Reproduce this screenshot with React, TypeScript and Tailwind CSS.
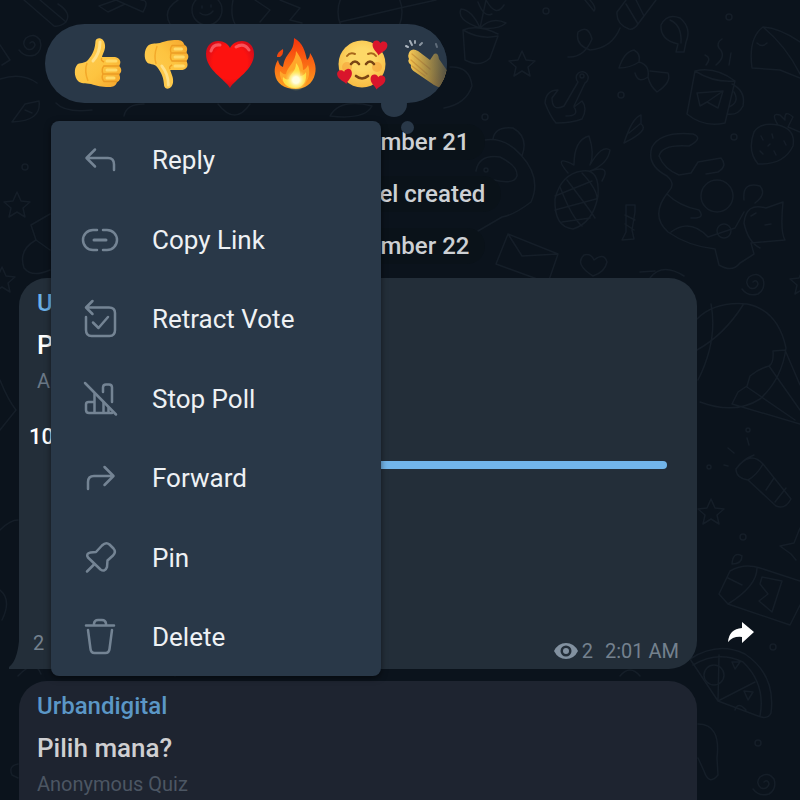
import type { ReactNode } from "react";

function Icon({ children }: { children: ReactNode }) {
  return (
    <svg className="size-10 shrink-0" viewBox="0 0 40 40" fill="none" stroke="#748494" strokeWidth="2.5" strokeLinecap="round" strokeLinejoin="round">
      {children}
    </svg>
  );
}

const menuItems = [
  {
    label: "Reply",
    icon: <path d="M15 9.5L6.5 18L15 26.5M7 18H28Q34 18 34 24.5V30" />,
  },
  {
    label: "Copy Link",
    icon: (
      <>
        <path d="M17 10H13A10 10 0 0 0 13 30H17M23 10H27A10 10 0 0 1 27 30H23" />
        <path d="M14 20H26" strokeWidth="3" />
      </>
    ),
  },
  {
    label: "Retract Vote",
    icon: (
      <>
        <path d="M12.5 2L6 8.5L12.5 15M6.5 8.5H29Q35 8.5 35 14V31Q35 37 29.5 37H11.5Q6 37 6 31V18" />
        <path d="M13 23.5L18.5 29L28 18" />
      </>
    ),
  },
  {
    label: "Stop Poll",
    icon: (
      <>
        <path d="M5 4L36 35.5" />
        <path d="M14.5 34V23H8.5Q6 23 6 25.5V31Q6 34 9 34H32M14.5 23V15M23.5 34V23M28.5 34V29" />
        <path d="M23 13V8.5Q23 5.5 26 5.5H29Q32 5.5 32 8.5V23" />
      </>
    ),
  },
  {
    label: "Forward",
    icon: <path d="M24.5 9L33.5 18L24.5 27M33 18H14Q8 18 8 24V31" />,
  },
  {
    label: "Pin",
    icon: (
      <>
        <path d="M22 7.5Q26 3.5 29.5 6.5L33.5 10.5Q36.5 14 33 17.5L27.5 22.5L27 29Q25 34.5 20.5 31.5L8 19.5Q5.5 15.5 10.5 14.5L16 14L22 7.5Z" />
        <path d="M14.5 26L7 33.5" />
      </>
    ),
  },
  {
    label: "Delete",
    icon: (
      <>
        <path d="M6 8.5H34M14 8V6.5Q14.5 3 18 3H22Q25.5 3 26 6.5V8" />
        <path d="M8 13L10.5 32Q11 36 14.5 36H25.5Q29 36 29.5 32L32 13" />
      </>
    ),
  },
];

function Hand() {
  return (
    <>
      <path
        d="M4 27C6 24 12 26 15 22C20 16 22 11 22.5 3C23.5 -1 31 -1 32 7C32.5 12 30 15 29 19L42 19C47 20 49 24 46 28C49 30 49 35 46 36C48 40 47 43 44 44C43 48 40 49 36 49C28 49 24 48 18 46C12 45 8 46 5 43C1 39 1 30 4 27Z"
        fill="url(#skin)"
      />
      <path d="M31 28H46M30 36H46M31 43.5H44" stroke="#eb9c24" strokeWidth="1.6" strokeLinecap="round" fill="none" />
      <path d="M29 20Q27 22 31 24M31 28Q28 31 30 36Q28 40 31 43.5" stroke="#f0a024" strokeWidth="1.5" fill="none" />
      <path d="M14 25Q11 33 15 43" stroke="#f3a92a" strokeWidth="1.5" fill="none" />
      <path d="M27 4Q27 15 20 23" stroke="#ffe18a" strokeWidth="3" strokeLinecap="round" fill="none" />
      <path d="M34 23H43M34 32H43M34 40H41" stroke="#ffdb6c" strokeWidth="3" strokeLinecap="round" fill="none" />
    </>
  );
}

const heartPath =
  "M25 50C20 41 1 32 1 16C1 7 7 3 13 3C19 3 23 6 25 10C27 6 31 3 37 3C43 3 49 7 49 16C49 32 30 41 25 50Z";

const reactions = [
  { name: "Thumbs up", art: <Hand /> },
  {
    name: "Thumbs down",
    art: (
      <g transform="translate(4 51) scale(.94 -1)">
        <Hand />
      </g>
    ),
  },
  {
    name: "Red heart",
    art: (
      <>
        <path d={heartPath} fill="url(#heart)" />
        <path d="M6 13Q8 6 15 7M31 9Q39 4 44 12" stroke="#ff7077" strokeWidth="3" strokeLinecap="round" fill="none" opacity=".7" />
      </>
    ),
  },
  {
    name: "Fire",
    art: (
      <>
        <path
          d="M23 0C32 5 34 13 36 22C38 20 39 18 39 15C43 21 46 29 44 36C42 46 33 51 25 51C13 51 5 45 4 36C3 30 5 25 7 22C8 26 9 28 12 29C13 22 15 19 18 15C22 10 23 6 23 0Z"
          fill="url(#flame)"
        />
        <path d="M12 11Q13 16 9 19L6 19Q6 14 12 11Z" fill="#f0480f" />
        <path d="M25 13C30 20 32 25 32 32C34 32 36 29 37 27C40 35 38 48 25 49C12 49 8 39 9 33C11 35 13 37 15 36C16 29 25 24 25 13Z" fill="#ffa62a" />
        <path d="M25 25C29 30 29 34 29 38C32 38 34 36 35 34C36 42 33 50 24 50C14 50 11 43 12 39C14 41 16 42 18 41C19 35 25 34 25 25Z" fill="#ffdf43" />
        <circle cx="25" cy="42" r="11" fill="url(#glow)" />
      </>
    ),
  },
  {
    name: "Smiling face with hearts",
    art: (
      <>
        <circle cx="25" cy="26" r="23.5" fill="url(#face)" />
        <circle cx="10" cy="29" r="5" fill="#f7a23a" opacity=".6" />
        <circle cx="40" cy="29" r="5" fill="#f7a23a" opacity=".6" />
        <path d="M14 26Q18 21 22 26M29 26Q33 21 37 26M19 38Q25 43 31 38" stroke="#7a4514" strokeWidth="2.6" strokeLinecap="round" fill="none" />
        <path d="M10 18Q13 14 18 16M31 16Q36 14 39 18" stroke="#a8661a" strokeWidth="2" strokeLinecap="round" fill="none" />
        <path d={heartPath} transform="translate(36 1) rotate(8) scale(.31)" fill="#d9152b" />
        <path d={heartPath} transform="translate(-1 32) rotate(-10) scale(.31)" fill="#d9152b" />
        <path d={heartPath} transform="translate(34 35) rotate(8) scale(.31)" fill="#d9152b" />
      </>
    ),
  },
  {
    name: "Clapping hands",
    art: (
      <>
        <path d="M7 13Q10 10 15 13L27 22L31 16Q35 14 36 21L45 34L44 48Q39 52 31 47L12 34Q7 31 8 27Q4 24 6 21Q4 17 7 13Z" fill="url(#skin)" />
        <path d="M9 16L27 31M8 22L24 36M9 28L22 38" stroke="#e9a83a" strokeWidth="1.3" strokeLinecap="round" fill="none" />
        <path d="M5 9L3 8M9 7L7 3M12 5L12 3M17 7L19 5M34 9L33 6" stroke="#aeb8c2" strokeWidth="2" strokeLinecap="round" />
      </>
    ),
  },
];

// faint doodles behind the chat
function Wallpaper() {
  return (
    <svg className="absolute inset-0 size-full" viewBox="0 0 800 800" preserveAspectRatio="xMinYMin slice" fill="none" stroke="#151e28" strokeWidth="1.5" strokeLinecap="round" strokeLinejoin="round" aria-hidden="true">
      <defs>
        <path id="star" d="M0-13L4-4L13-3L6 3L8 12L0 7L-8 12L-6 3L-13-3L-4-4Z" />
        <path id="swirl" d="M0 0Q4-3 5 2Q3 8-3 6Q-9 1-4-5Q4-11 10-3Q13 7 5 12Q-5 15-11 7" />
      </defs>
      <use href="#star" x="522" y="64" />
      <use href="#star" x="711" y="512" />
      <use href="#star" x="17" y="205" />
      <use href="#star" x="2" y="280" />
      <use href="#star" x="803" y="282" />
      <use href="#swirl" x="753" y="282" />
      <use href="#swirl" x="764" y="782" />
      <use href="#swirl" x="30" y="43" />
      <g>
        <circle cx="546" cy="11" r="3" />
        <circle cx="729" cy="17" r="3" />
        <circle cx="621" cy="95" r="3" />
        <circle cx="734" cy="137" r="3" />
        <circle cx="485" cy="117" r="3" />
        <circle cx="743" cy="537" r="3" />
        <circle cx="773" cy="647" r="3" />
        <circle cx="758" cy="743" r="3" />
        <circle cx="709" cy="467" r="2" />
        <circle cx="748" cy="430" r="2" />
        <circle cx="25" cy="167" r="3" />
      </g>
      {/* potted plant */}
      <path d="M463 30Q480 40 498 36L490 58Q480 68 465 60ZM463 30Q478 24 498 34M480 28Q456 20 461 9Q472 10 480 28Q492 16 506 23Q498 30 480 28L486 0Q496 18 504 5M478 2Q484 18 492 14" />
      {/* firework and string */}
      <path d="M617 12Q616 24 629 29Q634 30 638 24L656 0M617 12L626 0M626 4L638 24M636 0L644 16M620 28Q612 48 590 50Q575 45 578 32Q588 24 592 39Q584 58 568 57" />
      <path d="M585 0L594 11Q597 8 590 0" />
      {/* balloon, bow, anchor */}
      <path d="M661 25Q667 13 680 18Q692 28 686 42L684 52L676 52L678 44Q660 40 661 25ZM670 20Q682 25 681 43" />
      <path d="M634 50Q641 54 639 62Q630 68 619 68Q624 52 634 50ZM639 62Q650 65 648 77Q638 84 635 73M650 71L668 73Q672 82 657 92Q650 86 648 77" />
      <path d="M578 82L564 106M585 83L574 106M578 82A6 6 0 1 1 585 83M564 106Q552 112 552 98L558 90Q546 90 545 103Q550 116 556 123Q572 123 582 119Q588 108 582 101L574 107Q580 116 566 116" />
      <circle cx="582" cy="76" r="2" />
      {/* steaming mug */}
      <path d="M695 71L687 114Q704 128 725 123L735 81Q714 83 695 71ZM695 71Q715 66 735 81M732 84Q746 91 743 106Q738 116 727 114M734 92Q740 102 729 107M697 93L723 91L718 108L707 102L700 106ZM707 102L723 91M706 65Q712 58 705 55M716 65Q727 56 719 48Q716 43 722 39M729 65L731 53" />
      {/* little ghost */}
      <path d="M800 78L780 70L752 68Q748 38 763 27Q780 28 800 42M763 27Q786 46 800 74M757 43Q762 48 767 43" />
      {/* strawberry */}
      <path d="M754 132Q760 122 778 125Q796 129 793 146Q784 165 758 164Q747 151 754 132ZM778 125Q770 112 780 115L785 120Q784 109 793 117L788 127L800 132M761 136L763 140M772 134L773 138M784 141L786 145M760 151L763 154M774 151L776 155M770 144L768 146" />
      {/* leaf, pineapple, candy */}
      <path d="M624 143Q632 118 641 115L641 124Q650 130 624 143M629 133L640 124M582 171Q600 168 598 196Q593 223 573 229Q554 227 555 199Q561 174 582 171ZM568 173Q552 154 574 165Q574 140 589 136Q595 154 590 165Q602 144 610 150Q608 164 590 171Q612 164 602 181M567 180Q590 210 595 218M582 173Q598 190 597 200M555 196L592 181M555 210L596 199M562 222L590 218M560 187Q572 218 582 226" />
      <path d="M626 205L635 205L635 212L632 230L634 239L622 240L626 232ZM625 215L635 220M625 224L634 230" />
      {/* panda */}
      <path d="M485 140Q505 137 521 155Q542 178 531 202Q514 215 502 217L478 231M493 139Q495 126 513 128Q529 137 522 156M476 171Q479 154 500 157Q518 166 517 176Q514 185 494 180" />
      <circle cx="486" cy="170" r="2" />
      {/* cat wrapped round a ball */}
      <path d="M689 146Q704 138 693 134Q661 131 652 147Q646 165 667 176Q676 184 669 191Q649 215 668 232Q688 246 715 249L719 265Q732 273 740 263L754 254L751 243L785 240Q780 232 783 202L766 208Q746 202 744 223Q748 242 760 248M689 146Q662 144 659 156Q664 169 679 175L691 173L698 162L721 158Q728 166 718 172L706 174M667 194Q679 206 699 210Q706 219 691 218M671 232Q690 218 708 237L735 228L744 212M744 200Q742 181 760 186Q767 194 755 203M751 216L756 213M765 225L771 224" />
      <circle cx="717" cy="196" r="16" />
      <circle cx="724" cy="231" r="7" />
      {/* letter and heart */}
      <path d="M508 234L558 254L549 280M508 234L496 264L540 280M508 234L522 256L558 254M593 276Q574 264 584 255Q591 253 594 260Q604 252 607 262Q605 272 593 276M650 278Q662 262 684 276M640 272L655 271" />
      {/* hot air balloon */}
      <path d="M697 319Q715 301 747 304Q778 310 786 348Q782 379 760 399Q735 415 700 402M711 304Q718 340 698 380M743 305Q724 335 697 350M785 350L773 351Q774 363 769 366Q758 369 750 376L747 386L738 392L732 404M785 350L800 385M769 366L800 410M747 387L795 420M732 404L800 424" />
      {/* torch, parcel, pizza */}
      <path d="M736 469Q750 450 763 464L791 499Q785 510 776 506L748 480Q736 478 736 469ZM736 469Q743 459 754 455M748 480Q757 475 763 464M766 490L774 478M775 502L786 488M728 448L734 453M747 438L749 445M724 465L728 466" />
      <path d="M719 594L730 571Q744 563 760 568L800 581M719 594L728 604L790 625L800 605M728 604Q757 586 757 568M728 578L742 585M762 577L782 581L772 612L759 601L768 594L760 584ZM732 564Q733 551 742 556Q742 564 732 564" />
      <path d="M690 659Q718 641 745 654Q776 675 771 713Q768 720 758 716L718 701ZM693 665Q718 650 743 662Q766 684 760 716M718 701L719 655M718 701L755 682M732 662L740 662L735 669ZM744 691L753 692L748 700ZM735 710Q738 701 746 710M698 724Q721 724 717 758L718 775Q709 786 704 771L698 758" />
      <circle cx="714" cy="675" r="10" />
      <path d="M800 528L794 543L780 546L791 554L796 560" />
      {/* upper left corner */}
      <path d="M24 0L54 26M40 0L66 22Q72 13 58 4M54 26Q60 27 66 22M0 45L10 60L2 65M0 79Q22 72 37 83M99 6L116 0L143 12Q150 0 141 0M99 6L108 12L125 4M170 24Q162 10 178 0M235 24Q230 15 233 0M255 0L270 10L260 22M280 0L300 8L290 20L302 23" />
      <circle cx="207" cy="10" r="15" />
      <circle cx="370" cy="12" r="32" />
      <path d="M202 6V8M211 5V7M200 13Q207 18 213 11M340 22L400 8L436 0" />
      <path d="M12 122L25 104L39 101Q42 121 12 122M25 110L32 113M56 103Q65 113 92 110M124 116Q126 104 144 104M218 104Q235 126 250 104M330 116Q340 98 372 106Q365 120 330 116M450 67Q470 66 472 86Q466 104 444 108" />
      <path d="M50 214L31 225L36 240L50 250M36 240Q18 250 24 268Q32 278 50 270M0 380Q8 400 16 410L0 430M0 530Q10 520 18 520M0 590Q12 600 2 620M18 676Q35 658 41 674M18 764Q8 766 12 775L18 778M175 676L182 671M620 676Q630 664 640 676" />
    </svg>
  );
}

function ReactionBar() {
  return (
    <div className="absolute top-6 left-[45px] z-20">
      <div className="absolute top-[67px] left-[336px] size-[26px] rounded-full bg-[#293848]" />
      <div className="absolute top-[97px] left-[356px] size-[13px] rounded-full bg-[#293848]" />
      <div className="relative flex h-[79px] w-[402px] items-center gap-4 overflow-hidden rounded-full bg-[#293848] pl-7">
        {reactions.map((r) => (
          <button key={r.name} type="button" aria-label={r.name} className="shrink-0">
            <svg className="block h-[52px] w-[50px] overflow-visible" viewBox="0 0 50 52">
              {r.art}
            </svg>
          </button>
        ))}
        <div className="pointer-events-none absolute inset-y-0 right-0 w-10 bg-linear-to-r from-[#29384800] to-[#293848cc]" />
      </div>
      <svg className="absolute size-0" aria-hidden="true">
        <defs>
          <linearGradient id="skin" x1="0" y1="0" x2="1" y2="1">
            <stop offset="0" stopColor="#ffcf58" />
            <stop offset=".6" stopColor="#fdc440" />
            <stop offset="1" stopColor="#f5a52c" />
          </linearGradient>
          <radialGradient id="heart" cx=".5" cy=".45" r=".6">
            <stop offset=".6" stopColor="#fd120f" />
            <stop offset="1" stopColor="#c90a1c" />
          </radialGradient>
          <linearGradient id="flame" x1="0" y1="0" x2="0" y2="1">
            <stop offset="0" stopColor="#f4330b" />
            <stop offset=".6" stopColor="#fb7316" />
            <stop offset="1" stopColor="#fca321" />
          </linearGradient>
          <radialGradient id="glow">
            <stop offset=".3" stopColor="#fffde0" />
            <stop offset="1" stopColor="#ffe95a" stopOpacity="0" />
          </radialGradient>
          <radialGradient id="face" cx=".5" cy=".4" r=".6">
            <stop offset=".4" stopColor="#fdd867" />
            <stop offset="1" stopColor="#f8bc42" />
          </radialGradient>
        </defs>
      </svg>
    </div>
  );
}

function ContextMenu() {
  return (
    <div role="menu" className="absolute top-[121px] left-[51px] z-10 flex h-[555px] w-[330px] flex-col justify-between rounded-lg bg-[#293848] shadow-[0_2px_6px_rgba(0,0,0,0.5)]">
      {menuItems.map((item) => (
        <button key={item.label} type="button" role="menuitem" className="flex h-[78px] w-full items-center gap-8 pl-[29px] text-left text-[26px] leading-8 text-[#eef1f4]">
          <Icon>{item.icon}</Icon>
          <span>{item.label}</span>
        </button>
      ))}
    </div>
  );
}

export default function App() {
  return (
    <main className="relative h-screen overflow-hidden bg-[#0b131c] font-[Roboto,sans-serif]">
      <Wallpaper />

      <div className="relative flex flex-col pt-[124px]">
        <div className="flex flex-col items-center gap-4 pr-1 text-2xl leading-9 font-medium text-[#cdd0d4]">
          <p className="rounded-full bg-[#0a1219] px-4">December 21</p>
          <p className="rounded-full bg-[#0a1219] px-4">Channel created</p>
          <p className="rounded-full bg-[#0a1219] px-4">December 22</p>
        </div>

        <div className="mt-3.5 flex pl-[19px]">
          <article className="relative flex h-[391px] flex-1 flex-col rounded-[28px] rounded-bl-none bg-[#232e39] px-[18px] pt-[7px]">
            <svg className="absolute bottom-0 -left-2.5 h-7 w-2.5" viewBox="0 0 10 28" fill="#232e39">
              <path d="M10 0V28H0V26Q8 20 10 0Z" />
            </svg>
            <a href="#" className="text-2xl leading-9 font-medium text-[#6cb1e8]">Urbandigital</a>
            <h2 className="mt-1 text-[26px] leading-10 font-medium text-white">Pilih mana?</h2>
            <p className="text-xl leading-8 text-[#6b7987]">Anonymous</p>
            <div className="-ml-2 pt-6">
              <p className="text-[22px] leading-8 font-medium text-white">100%</p>
              <div className="mt-2 mr-3 ml-12 h-2 rounded-full bg-[#72b5ea]" />
            </div>
            <footer className="mt-auto flex items-end pb-1 text-xl leading-7 text-[#74818e]">
              <span className="-ml-1 pb-2">2</span>
              <svg className="mr-1 mb-1 ml-auto h-5 w-6" viewBox="0 0 24 20">
                <path d="M0 10Q4 2 12 2T24 10Q20 18 12 18T0 10Z" fill="#8291a0" />
                <circle cx="12" cy="10" r="5.5" fill="#232e39" />
                <circle cx="12" cy="10" r="3" fill="#8291a0" />
              </svg>
              <span>2</span>
              <time className="ml-3">2:01 AM</time>
            </footer>
          </article>
          <aside className="flex w-[103px] shrink-0 items-end justify-center pr-4 pb-6">
            <button type="button" aria-label="Share" className="rounded-full">
              <svg className="h-6 w-7" viewBox="0 0 28 24" fill="#fff">
                <path d="M15 1L27 11L15 22V16Q6 15 1 21Q2 8 15 7Z" />
              </svg>
            </button>
          </aside>
        </div>

        <div className="mt-3 flex pr-[103px] pl-[19px]">
          <article className="flex h-[391px] flex-1 flex-col rounded-[28px] bg-[#1e2430] px-[18px] pt-[7px]">
            <a href="#" className="text-2xl leading-9 font-medium text-[#5b97c6]">Urbandigital</a>
            <h2 className="mt-1 text-[26px] leading-10 font-medium text-[#cfcfd2]">Pilih mana?</h2>
            <p className="text-xl leading-8 text-[#4c5663]">Anonymous Quiz</p>
          </article>
        </div>
      </div>

      <ContextMenu />
      <ReactionBar />
    </main>
  );
}
